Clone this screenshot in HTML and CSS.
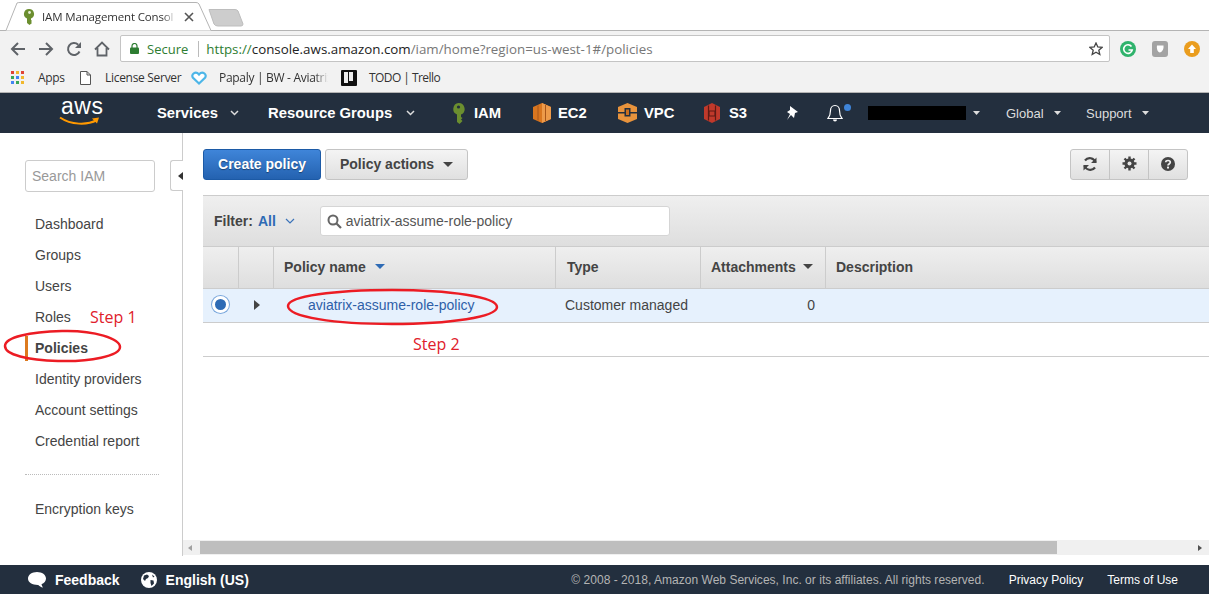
FILE: index.html
```html
<!DOCTYPE html>
<html lang="en">
<head>
    <meta charset="UTF-8">
    <title>IAM Management Console</title>
    <link rel="stylesheet" href="styles.css">
</head>
<body>
    <!-- browser chrome -->
    <div class="tab-strip">
        <svg class="tab-shape" width="250" height="31" viewBox="0 0 250 31">
            <path d="M0 30.500H6L17 3Q18 2.500 20 2.500H196Q198 2.500 199 4L211 30.500H250" fill="#fff" stroke="#b4b4b4"/>
            <path d="M209 9.500H235Q237 9.500 238 11L243 24Q243 26 241 26H218Q215 26 214 24Z" fill="#cdcdcd" stroke="#bdbdbd"/>
        </svg>
        <svg class="tab-key" width="12" height="16" viewBox="0 0 12 16">
            <path d="M6 0a5 5 0 0 1 2 9.600V11l1 1-1 1 1 1-2.500 2L4 14V9.600A5 5 0 0 1 6 0z" fill="#6b8e2f"/>
            <circle cx="6.500" cy="3.500" r="1.400" fill="#e9efd8"/>
        </svg>
        <span class="tab-title">IAM Management Consol</span>
        <svg class="tab-close" width="10" height="10" viewBox="0 0 10 10"><path d="M1 1l8 8M9 1l-8 8" stroke="#555" stroke-width="1.600"/></svg>
    </div>
    <div class="toolbar">
        <svg class="tool-icon" width="16" height="16" viewBox="0 0 16 16"><path d="M15 8H2M8 2L2 8l6 6" fill="none" stroke="#5f6368" stroke-width="2"/></svg>
        <svg class="tool-icon" width="16" height="16" viewBox="0 0 16 16"><path d="M1 8h13M8 2l6 6-6 6" fill="none" stroke="#5f6368" stroke-width="2"/></svg>
        <svg class="tool-icon" width="16" height="16" viewBox="0 0 16 16"><path d="M13.500 10.500A6 6 0 1 1 12.200 3.700" fill="none" stroke="#5f6368" stroke-width="2"/><path d="M15 1v6H9z" fill="#5f6368"/></svg>
        <svg class="tool-icon" width="16" height="16" viewBox="0 0 16 16"><path d="M1 8.500L8 1.500l7 7M3.500 7v7.500h9V7" fill="none" stroke="#5f6368" stroke-width="1.800"/></svg>
        <div class="omnibox">
            <svg class="lock" width="9" height="11" viewBox="0 0 9 11"><path d="M2 5V3a2.500 2.500 0 0 1 5 0v2" fill="none" stroke="#2e7d32" stroke-width="1.200"/><rect y="4.500" width="9" height="6.500" rx="1" fill="#2e7d32"/></svg>
            <span class="secure">Secure</span>
            <span class="url"><span class="url-scheme">https://</span><span class="url-host">console.aws.amazon.com</span>/iam/home?region=us-west-1#/policies</span>
            <svg class="star" width="14" height="14" viewBox="0 0 14 14"><path d="M7 1l1.800 4 4.200.4-3.200 2.800 1 4.300L7 10.200 3.200 12.500l1-4.300L1 5.400 5.200 5z" fill="none" stroke="#444" stroke-width="1.300"/></svg>
        </div>
        <div class="ext-icons">
            <svg width="16" height="16" viewBox="0 0 16 16"><circle cx="8" cy="8" r="8" fill="#2fb36c"/><path d="M11.500 5.500A4.300 4.300 0 1 0 12.200 9H8.500" fill="none" stroke="#fff" stroke-width="1.600"/></svg>
            <svg width="16" height="16" viewBox="0 0 16 16"><rect width="16" height="16" rx="3" fill="#a3a3a3"/><path d="M5 4.500h6.500c.5 3-.8 6-3.500 7-2.500-.5-3.500-3.500-3-7z" fill="#fff"/></svg>
            <svg width="16" height="16" viewBox="0 0 16 16"><circle cx="8" cy="8" r="8" fill="#ea9d1e"/><path d="M8 3.500L12 8H9.800v4H6.200V8H4z" fill="#fff"/></svg>
        </div>
    </div>
    <div class="bookmarks">
        <span class="bm bm-apps">
            <span class="apps-grid">
                <i class="c-r"></i><i class="c-y"></i><i class="c-r"></i>
                <i class="c-g"></i><i class="c-b"></i><i class="c-y"></i>
                <i class="c-b"></i><i class="c-g"></i><i class="c-y"></i>
            </span>
            Apps
        </span>
        <span class="bm bm-license">
            <svg width="11" height="14" viewBox="0 0 11 14"><path d="M.5.500h6.500l3.500 3.500v9.500H.5zM7 .5V4h3.500" fill="#fff" stroke="#555"/></svg>
            License Server
        </span>
        <span class="bm bm-papaly">
            <svg width="16" height="14" viewBox="0 0 16 14"><path d="M8 12.500L2 6.800C-.5 3.500 4.500-.5 8 3.500c3.500-4 8.500 0 6 3.300z" fill="#fff" stroke="#4db6e8" stroke-width="2.200"/></svg>
            <span class="bm-fade">Papaly | BW - Aviatrix</span>
        </span>
        <span class="bm bm-trello">
            <span class="trello-icon"><i></i><i></i></span>
            TODO | Trello
        </span>
    </div>

    <!-- aws console nav -->
    <nav class="top-nav">
        <span class="aws-logo">
            <span class="aws-word">aws</span>
            <svg width="42" height="10" viewBox="0 0 42 10"><path d="M1 1.500C12 9 28 9.500 38 4" fill="none" stroke="#f90" stroke-width="2"/><path d="M33 2.500l7-1-2 6z" fill="#f90"/></svg>
        </span>
        <span class="nav-menu nav-services">Services <svg class="chev" width="9" height="6" viewBox="0 0 9 6"><path d="M1 1l3.500 3.500L8 1" fill="none" stroke="#ddd" stroke-width="1.500"/></svg></span>
        <span class="nav-menu nav-groups">Resource Groups <svg class="chev" width="9" height="6" viewBox="0 0 9 6"><path d="M1 1l3.500 3.500L8 1" fill="none" stroke="#ddd" stroke-width="1.500"/></svg></span>
        <span class="nav-menu nav-iam">
            <svg width="13" height="21" viewBox="0 0 13 21"><path d="M6.500 0a6 6 0 0 1 2.500 11.500V14l1.500 1-1.500 1.500 1.500 1.500-3 3-2.500-2V11.500A6 6 0 0 1 6.500 0z" fill="#6b8e2f"/><circle cx="6.500" cy="4" r="1.600" fill="#232f3e"/></svg>
            IAM
        </span>
        <span class="nav-menu nav-ec2">
            <svg width="18" height="20" viewBox="0 0 18 20"><path d="M0 4l9-4 9 4v12l-9 4-9-4z" fill="#d9761f"/><path d="M9 0l9 4v12l-9 4z" fill="#ed9a4a"/><path d="M5 2.500v15M12.500 2v16" stroke="#a8561a"/></svg>
            EC2
        </span>
        <span class="nav-menu nav-vpc">
            <svg width="19" height="20" viewBox="0 0 19 20"><path d="M0 4l9.500-4L19 4v12l-9.500 4L0 16z" fill="#e8933c"/><path d="M0 9h6.500V5h6v4H19v1.500h-6.500v3h-6v-3H0z" fill="#232f3e"/><path d="M8 6.500h3v5.500H8z" fill="#c96e1e"/></svg>
            VPC
        </span>
        <span class="nav-menu nav-s3">
            <svg width="16" height="20" viewBox="0 0 16 20"><path d="M0 4l8-4 8 4v12l-8 4-8-4z" fill="#c0392b"/><path d="M4.500 2.500v15M11.500 2.500v15M5 8h6v5H5z" fill="none" stroke="#5e1a14" stroke-width="1.200"/></svg>
            S3
        </span>
        <svg class="nav-pin" width="14" height="15" viewBox="0 0 14 15"><path d="M5 0l8 6-3 1-1 5-3-3-4 5 3-6-3-2 3-2z" fill="#fff"/></svg>
        <span class="nav-bell">
            <svg width="16" height="19" viewBox="0 0 16 19"><path d="M8 1.500c3 0 4.500 2.500 4.500 5 0 4 .8 6 2.500 8H1c1.700-2 2.500-4 2.500-8 0-2.500 1.500-5 4.500-5z" fill="none" stroke="#fff" stroke-width="1.200"/><path d="M6 15.500a2 2 0 0 0 4 0z" fill="#fff"/></svg>
            <i class="bell-dot"></i>
        </span>
        <span class="redacted"></span>
        <svg class="nav-account" width="7" height="4" viewBox="0 0 7 4"><path d="M0 0h7L3.500 4z" fill="#ddd"/></svg>
        <span class="nav-small nav-global">Global <svg class="caret-small" width="7" height="4" viewBox="0 0 7 4"><path d="M0 0h7L3.500 4z" fill="#ddd"/></svg></span>
        <span class="nav-small nav-support">Support <svg class="caret-small" width="7" height="4" viewBox="0 0 7 4"><path d="M0 0h7L3.500 4z" fill="#ddd"/></svg></span>
    </nav>

    <div class="page-body">
        <aside class="sidebar">
            <input class="side-search" type="text" placeholder="Search IAM">
            <span class="side-toggle"><i></i></span>
            <ul class="side-list">
                <li>Dashboard</li>
                <li>Groups</li>
                <li>Users</li>
                <li>Roles</li>
                <li class="active">Policies</li>
                <li>Identity providers</li>
                <li>Account settings</li>
                <li>Credential report</li>
            </ul>
            <div class="side-divider"></div>
            <ul class="side-list">
                <li>Encryption keys</li>
            </ul>
        </aside>

        <main class="content">
            <div class="actions">
                <button class="btn btn-primary">Create policy</button>
                <button class="btn btn-default">Policy actions <i class="caret"></i></button>
                <div class="btn-group">
                    <span class="btn-icon">
                        <svg width="16" height="16" viewBox="0 0 16 16"><path d="M13.500 6.500A6 6 0 0 0 3 4.500M2.500 9.500A6 6 0 0 0 13 11.500" fill="none" stroke="#444" stroke-width="2.200"/><path d="M14.500 1.500v5.500H9zM1.500 14.500V9H7z" fill="#444"/></svg>
                    </span>
                    <span class="btn-icon">
                        <svg width="15" height="15" viewBox="0 0 15 15"><circle cx="7.500" cy="7.500" r="3.600" fill="none" stroke="#444" stroke-width="3"/><path d="M7.500 .5v14M.5 7.500h14M2.500 2.500l10 10M12.500 2.500l-10 10" stroke="#444" stroke-width="2.400"/><circle cx="7.500" cy="7.500" r="2" fill="#e8e8e8"/></svg>
                    </span>
                    <span class="btn-icon">
                        <svg width="14" height="14" viewBox="0 0 14 14"><circle cx="7" cy="7" r="7" fill="#444"/><path d="M4.700 5.200C4.900 2.900 9.300 2.900 9.300 5.300c0 1.700-2.300 1.700-2.300 3.200" fill="none" stroke="#eee" stroke-width="1.700"/><rect x="6" y="9.600" width="2" height="1.900" fill="#eee"/></svg>
                    </span>
                </div>
            </div>

            <div class="filter-bar">
                <span class="filter-label">Filter:</span>
                <span class="filter-value">All</span>
                <svg class="filter-chev" width="10" height="6" viewBox="0 0 10 6"><path d="M1 1l4 4 4-4" fill="none" stroke="#3b73b9" stroke-width="1.200"/></svg>
                <div class="filter-search">
                    <svg width="15" height="15" viewBox="0 0 15 15"><circle cx="6" cy="6" r="4.500" fill="none" stroke="#666" stroke-width="2"/><path d="M9.500 9.500l4.500 4.500" stroke="#666" stroke-width="2.200"/></svg>
                    aviatrix-assume-role-policy
                </div>
            </div>

            <div class="table-row table-head">
                <div class="cell"></div>
                <div class="cell"></div>
                <div class="cell cell-name">Policy name <i class="caret caret-blue"></i></div>
                <div class="cell cell-type">Type</div>
                <div class="cell cell-attach">Attachments <i class="caret"></i></div>
                <div class="cell cell-desc">Description</div>
            </div>
            <div class="table-row table-selected">
                <div class="cell"><span class="radio"></span></div>
                <div class="cell"><i class="expand"></i></div>
                <div class="cell cell-link">aviatrix-assume-role-policy</div>
                <div class="cell cell-type-val">Customer managed</div>
                <div class="cell cell-num">0</div>
                <div class="cell"></div>
            </div>
            <div class="table-empty"></div>

            <div class="scrollbar">
                <i class="arrow-left"></i>
                <div class="scroll-track"><div class="scroll-thumb"></div></div>
                <i class="arrow-right"></i>
            </div>
        </main>
    </div>

    <footer class="footer">
        <span class="foot-item foot-feedback">
            <svg width="18" height="16" viewBox="0 0 18 16"><path d="M9 0c5 0 9 2.800 9 6.500 0 2.600-1.800 4.600-4.500 5.700.2 1.200.8 2.400 1.500 3.300-2-.3-3.700-1.500-4.800-2.600C4.500 13 0 10.500 0 6.500 0 2.800 4 0 9 0z" fill="#fff"/></svg>
            Feedback
        </span>
        <span class="foot-item">
            <svg width="16" height="16" viewBox="0 0 16 16"><circle cx="8" cy="8" r="8" fill="#fff"/><path d="M3 3.500l3-1 2 1.500-1 2-2 1-1 2-2-2zM9.500 8l3 .5 .5 3-2.500 2.500-1-3zM11 2.500l2.500 2-1.500 1z" fill="#232f3e"/></svg>
            English (US)
        </span>
        <span class="foot-right">
            <span class="foot-copy">© 2008 - 2018, Amazon Web Services, Inc. or its affiliates. All rights reserved.</span>
            <span class="foot-link">Privacy Policy</span>
            <span class="foot-link">Terms of Use</span>
        </span>
    </footer>

    <!-- hand drawn annotations on top of the screenshot -->
    <svg class="marks" width="1209" height="595" viewBox="0 0 1209 595">
        <path d="M62 331C95 330 120 339 120 347C120 356 90 362 58 361C28 360 5 355 5 346C5 337 30 332 62 331z" fill="none" stroke="#ec1c24" stroke-width="2.500"/>
        <path d="M392 290C450 290 497 297 497 307C497 317 450 324 392 324C335 324 288 317 288 306C288 296 335 290 392 290z" fill="none" stroke="#ec1c24" stroke-width="2.500"/>
    </svg>
    <span class="step step-one">Step 1</span>
    <span class="step step-two">Step 2</span>
</body>
</html>
```

FILE: styles.css
```css
* {
    box-sizing: border-box;
}
html, body {
    height: 100%;
}
body {
    margin: 0;
    position: relative;
    display: flex;
    flex-direction: column;
    height: 595px;
    overflow: hidden;
    background: #fff;
    font-family: "Liberation Sans", Arial, sans-serif;
    font-size: 14px;
    color: #444;
}
ul {
    list-style: none;
    margin: 0;
    padding: 0;
}
i {
    display: block;
}

/* browser chrome */
.tab-strip {
    position: relative;
    flex: 0 0 31px;
    display: flex;
    align-items: center;
    padding: 3px 0 0 23px;
    background: #fff;
    border-bottom: 1px solid #b4b4b4;
    font-family: "Open Sans", sans-serif;
    font-size: 11.500px;
    letter-spacing: -.15px;
    color: #333;
}
.tab-shape {
    position: absolute;
    left: 0;
    top: 0;
}
.tab-key, .tab-title, .tab-close {
    position: relative;
}
.tab-title {
    margin-left: 7px;
    width: 134px;
    white-space: nowrap;
    -webkit-mask-image: linear-gradient(to right, #000 90%, transparent);
    mask-image: linear-gradient(to right, #000 90%, transparent);
}
.tab-close {
    margin-left: 8px;
}
.toolbar {
    flex: 0 0 32px;
    display: flex;
    align-items: center;
    padding: 3px 0 0 10px;
    background: #f2f2f2;
}
.tool-icon {
    margin-right: 12px;
}
.toolbar .tool-icon:nth-child(4) {
    margin-right: 10px;
}
.omnibox {
    flex: 0 0 990px;
    height: 27px;
    display: flex;
    align-items: center;
    padding: 0 6px 0 9px;
    background: #fff;
    border: 1px solid #c4c4c4;
    border-radius: 2px;
    font-family: "Open Sans", sans-serif;
    font-size: 13.350px;
    color: #777;
    white-space: nowrap;
}
.secure {
    margin-left: 8px;
    padding-right: 10px;
    margin-right: 7px;
    color: #2e7d32;
    border-right: 1px solid #bbb;
    line-height: 16px;
    font-size: 13px;
}
.url-scheme {
    color: #2e7d32;
}
.url-host {
    color: #222;
}
.url {
    flex: 1;
}
.ext-icons {
    display: flex;
    align-items: center;
    gap: 16px;
    margin-left: 10px;
}
.bookmarks {
    flex: 0 0 30px;
    display: flex;
    align-items: center;
    padding-left: 11px;
    background: #f2f2f2;
    border-bottom: 1px solid #b4b4b4;
    font-family: "Open Sans", sans-serif;
    font-size: 12px;
    letter-spacing: -.3px;
    color: #333;
}
.bm {
    display: flex;
    align-items: center;
    white-space: nowrap;
}
.bm-apps {
    gap: 14px;
    width: 69px;
}
.apps-grid {
    display: grid;
    grid-template-columns: repeat(3, 3px);
    grid-auto-rows: 3px;
    gap: 2px;
}
.c-r { background: #e04436; }
.c-y { background: #f1b82d; }
.c-g { background: #3aa757; }
.c-b { background: #4285f4; }
.bm-license {
    gap: 14px;
    width: 111px;
}
.bm-papaly {
    gap: 12px;
    width: 150px;
}
.bm-fade {
    -webkit-mask-image: linear-gradient(to right, #000 84%, transparent 96%);
    mask-image: linear-gradient(to right, #000 84%, transparent 96%);
}
.bm-trello {
    gap: 12px;
    letter-spacing: -.55px;
}
.trello-icon {
    width: 16px;
    height: 16px;
    display: flex;
    gap: 1px;
    padding: 2px 3px;
    background: #111;
    border-radius: 1px;
}
.trello-icon i {
    width: 4px;
    height: 9px;
    background: #eee;
}
.trello-icon i:first-child {
    height: 11px;
}

/* console top nav */
.top-nav {
    flex: 0 0 40px;
    position: relative;
    display: flex;
    align-items: center;
    background: #232f3e;
    color: #fff;
    font-weight: bold;
    font-size: 14.800px;
    white-space: nowrap;
}
.aws-logo {
    width: 157px;
    padding-left: 59px;
    display: flex;
    flex-direction: column;
    margin-top: -4px;
}
.aws-word {
    font-weight: normal;
    font-size: 23px;
    line-height: 19px;
    letter-spacing: .5px;
    padding-left: 2px;
}
.nav-menu {
    display: flex;
    align-items: center;
    gap: 9px;
}
.chev {
    margin-left: 3px;
}
.nav-groups .chev {
    margin-left: 5px;
}
.nav-services { width: 111px; }
.nav-groups { width: 184px; }
.nav-iam { width: 81px; }
.nav-ec2 { width: 85px; gap: 7px; }
.nav-vpc { width: 86px; gap: 7px; }
.nav-s3 { width: 81px; gap: 9px; }
.nav-pin {
    margin-right: 28px;
}
.nav-bell {
    position: relative;
    display: block;
    width: 41px;
    height: 19px;
}
.bell-dot {
    position: absolute;
    left: 17px;
    top: 0;
    width: 7px;
    height: 7px;
    border-radius: 50%;
    background: #3f85d9;
}
.redacted {
    width: 98px;
    height: 14px;
    background: #000;
}
.nav-account {
    margin-left: 7px;
    margin-right: 26px;
}
.nav-small {
    font-weight: normal;
    font-size: 13px;
    color: #ddd;
    display: flex;
    align-items: center;
    gap: 8px;
}
.caret-small {
    margin-left: 2px;
}
.nav-global {
    width: 80px;
}

/* main area */
.page-body {
    flex: 1;
    display: flex;
    min-height: 0;
}
.sidebar {
    position: relative;
    flex: 0 0 183px;
    padding: 27px 0 0 0;
    border-right: 1px solid #ccc;
    margin-bottom: 9px;
}
.side-search {
    display: block;
    width: 130px;
    height: 32px;
    margin: 0 0 17px 25px;
    padding: 0 6px;
    border: 1px solid #ccc;
    border-radius: 3px;
    font-family: inherit;
    font-size: 14px;
    outline: none;
}
.side-search::placeholder {
    color: #999;
}
.side-toggle {
    position: absolute;
    right: -1px;
    top: 27px;
    width: 13px;
    height: 31px;
    display: flex;
    align-items: center;
    justify-content: flex-end;
    background: #fff;
    border: 1px solid #ccc;
    border-right: none;
    border-radius: 3px 0 0 3px;
}
.side-toggle i {
    width: 0;
    height: 0;
    border-style: solid;
    border-width: 4.500px 5px 4.500px 0;
    border-color: transparent #333 transparent transparent;
}
.side-list li {
    height: 31px;
    line-height: 31px;
    padding-left: 35px;
    color: #444;
}
.side-list li.active {
    position: relative;
    font-weight: bold;
}
.side-list li.active::before {
    content: "";
    position: absolute;
    left: 25px;
    top: 3px;
    width: 3px;
    height: 25px;
    background: #dd7a1f;
}
.side-divider {
    margin: 17px 23px 19px 25px;
    border-top: 1px dotted #bbb;
}
.content {
    flex: 1;
    min-width: 0;
    display: flex;
    flex-direction: column;
    padding: 16px 0 0 20px;
}
.actions {
    display: flex;
    align-items: flex-start;
    gap: 4px;
    padding-right: 21px;
    height: 46px;
}
.btn {
    height: 31px;
    border-radius: 3px;
    font-family: inherit;
    font-size: 14px;
    font-weight: bold;
    padding: 0 0 2px;
}
.btn-primary {
    width: 118px;
    border: 1px solid #1c5aa6;
    background: linear-gradient(#3f85d9, #2462b0);
    color: #fff;
    text-shadow: 0 1px 1px rgba(0,0,0,.4);
}
.btn-default, .btn-group {
    background: linear-gradient(#f4f4f4, #e0e0e0);
    border: 1px solid #c4c4c4;
    color: #444;
}
.btn-default {
    width: 143px;
}
.caret {
    display: inline-block;
    width: 0;
    height: 0;
    margin-left: 6px;
    vertical-align: 2px;
    border-style: solid;
    border-width: 5px 5px 0;
    border-color: #444 transparent transparent;
}
.btn-default .caret {
    margin-left: 5px;
}
.btn-group {
    margin-left: auto;
    display: flex;
    width: 118px;
    height: 31px;
    border-radius: 3px;
}
.btn-icon {
    flex: 1;
    display: flex;
    align-items: center;
    justify-content: center;
    border-left: 1px solid #c4c4c4;
    padding-bottom: 2px;
}
.btn-icon:first-child {
    border-left: none;
}

/* filter and table */
.filter-bar {
    height: 52px;
    flex: 0 0 52px;
    display: flex;
    align-items: center;
    padding: 0 0 0 11px;
    background: linear-gradient(#efefef, #dedede);
    border-top: 1px solid #ccc;
    border-bottom: 1px solid #ccc;
}
.filter-label {
    font-weight: bold;
    color: #444;
}
.filter-value {
    margin-left: 5px;
    font-weight: bold;
    color: #2e6bb5;
}
.filter-chev {
    margin-left: 9px;
}
.filter-search {
    margin-left: 25px;
    width: 350px;
    height: 30px;
    display: flex;
    align-items: center;
    gap: 4px;
    padding-left: 6px;
    background: #fff;
    border: 1px solid #d5d5d5;
    border-radius: 3px;
    color: #555;
}
.table-row {
    display: grid;
    grid-template-columns: 36px 35px 282px 145px 125px 1fr;
}
.table-head {
    height: 42px;
    background: linear-gradient(#efefef, #dedede);
    border-bottom: 1px solid #ccc;
    font-weight: bold;
}
.table-head .cell {
    border-right: 1px solid #ccc;
}
.table-head .cell:last-child {
    border-right: none;
}
.cell {
    display: flex;
    align-items: center;
    justify-content: center;
    padding-bottom: 2px;
}
.cell-name {
    justify-content: flex-start;
    padding-left: 10px;
}
.cell-name .caret {
    margin-left: 9px;
    border-top-color: #2e6bb5;
}
.cell-type, .cell-desc, .cell-attach {
    justify-content: flex-start;
    padding-left: 10px;
}
.cell-type {
    padding-left: 11px;
}
.cell-attach .caret {
    margin-left: 7px;
}
.table-selected {
    height: 34px;
    background: #e6f1fd;
    border-bottom: 1px solid #ccc;
}
.radio {
    width: 17px;
    height: 17px;
    margin-right: 2px;
    border-radius: 50%;
    background: #2e6bb5;
    border: 3px solid #fff;
    box-shadow: 0 0 0 1px #7aa7dc;
}
.expand {
    width: 0;
    height: 0;
    border-style: solid;
    border-width: 5px 0 5px 6px;
    border-color: transparent transparent transparent #444;
}
.cell-link {
    justify-content: flex-start;
    padding-left: 34px;
    color: #2e5fa8;
}
.cell-type-val {
    justify-content: flex-start;
    padding-left: 9px;
}
.cell-num {
    justify-content: flex-end;
    padding-right: 11px;
}
.table-empty {
    height: 34px;
    border-bottom: 1px solid #ccc;
}
.scrollbar {
    margin: auto 0 10px -20px;
    height: 15px;
    display: flex;
    align-items: center;
    background: #f0f0f0;
}
.scroll-track {
    flex: 1;
    height: 13px;
    margin: 0 5px 0 8px;
}
.scroll-thumb {
    width: 857px;
    height: 13px;
    background: #bebebe;
}
.arrow-left, .arrow-right {
    width: 0;
    height: 0;
    border-style: solid;
}
.arrow-left {
    margin-left: 5px;
    border-width: 3.500px 4px 3.500px 0;
    border-color: transparent #a0a0a0 transparent transparent;
}
.arrow-right {
    margin-right: 7px;
    border-width: 3.500px 0 3.500px 4px;
    border-color: transparent transparent transparent #505050;
}

/* footer */
.footer {
    flex: 0 0 29px;
    margin-bottom: 1px;
    display: flex;
    align-items: center;
    gap: 21px;
    padding-left: 28px;
    background: #232f3e;
    color: #fff;
    font-weight: bold;
}
.foot-item {
    display: flex;
    align-items: center;
    gap: 9px;
}
.foot-right {
    margin-left: auto;
    display: flex;
    align-items: center;
    gap: 24px;
    padding-right: 31px;
    font-weight: normal;
    font-size: 12px;
}
.foot-copy {
    color: #b4b4b4;
    letter-spacing: .025px;
}
.foot-right .foot-link {
    color: #fff;
}

/* red annotations */
.marks {
    position: absolute;
    left: 0;
    top: 0;
    pointer-events: none;
}
.step {
    position: absolute;
    font-family: "Open Sans", sans-serif;
    font-size: 16px;
    color: #e0202a;
}
.step-one {
    left: 90px;
    top: 306px;
}
.step-two {
    left: 413px;
    top: 333px;
}
```
